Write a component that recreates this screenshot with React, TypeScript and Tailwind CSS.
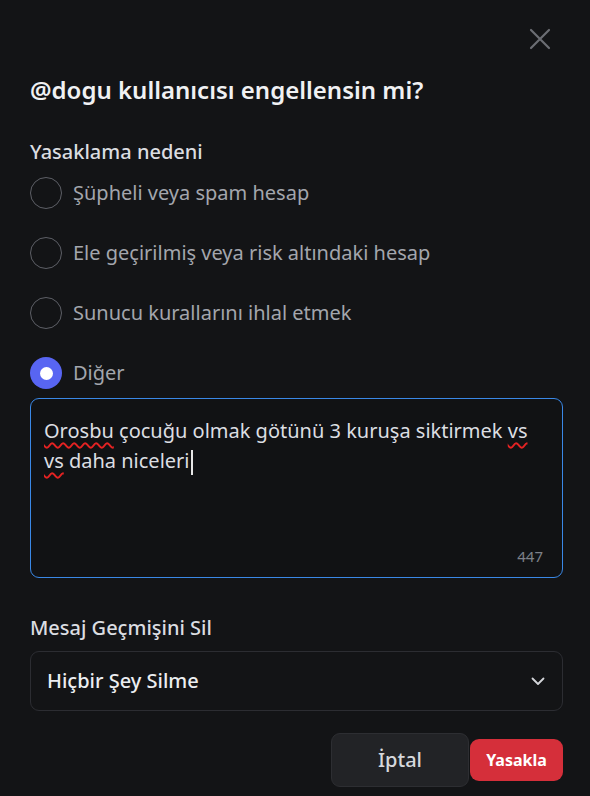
import React from "react";

const font = { fontFamily: '"Noto Sans", "Open Sans", sans-serif' };

function Radio({ label, checked }: { label: string; checked?: boolean }) {
  return (
    <div className="flex items-center h-[60px] gap-[11px]">
      {checked ? (
        <div className="w-[32px] h-[32px] rounded-full bg-[#5865f2] flex items-center justify-center shrink-0">
          <div className="w-[13px] h-[13px] rounded-full bg-white" />
        </div>
      ) : (
        <div className="w-[32px] h-[32px] rounded-full border-[1.5px] border-[#5d5f66] shrink-0" />
      )}
      <span className="text-[20px] text-[#a3a6ad] leading-none">{label}</span>
    </div>
  );
}

const wavy = "underline decoration-wavy decoration-[#e52222] decoration-[1.5px] underline-offset-[4px]";

export default function App() {
  return (
    <div className="w-[590px] h-[796px] bg-[#131416] pl-[30px] pr-[27px] overflow-hidden" style={font}>
      <div className="flex justify-end pt-[28px] pr-[12px]">
        <svg width="22" height="22" viewBox="0 0 22 22" fill="none">
          <path d="M2 2L20 20M20 2L2 20" stroke="#6b6d73" strokeWidth="2.2" strokeLinecap="round" />
        </svg>
      </div>
      <h1 className="mt-[25px] text-[24px] leading-[30px] font-semibold text-[#f0f1f3]">
        @dogu kullanıcısı engellensin mi?
      </h1>
      <div className="mt-[35px] text-[20px] leading-[24px] font-medium text-[#dbdde1]">Yasaklama nedeni</div>
      <div className="flex flex-col mt-[-1px]">
        <Radio label="Şüpheli veya spam hesap" />
        <Radio label="Ele geçirilmiş veya risk altındaki hesap" />
        <Radio label="Sunucu kurallarını ihlal etmek" />
        <Radio label="Diğer" checked />
      </div>
      <div className="relative mt-[-5px] h-[180px] rounded-[9px] border border-[#3a88e6] bg-[#111214] pl-[13px] pr-[30px] pt-[17px]">
        <p className="text-[20px] leading-[30px] text-[#dcdee2]">
          <span className={wavy}>Orosbu</span> çocuğu olmak götünü 3 kuruşa siktirmek{" "}
          <span className={wavy}>vs</span> <span className={wavy}>vs</span> daha niceleri
          <span className="inline-block w-[2px] h-[25px] bg-[#e6e6e6] align-middle ml-[1px]" />
        </p>
        <div className="absolute right-[19px] bottom-[10px] text-[15px] text-[#7d8088]">447</div>
      </div>
      <div className="mt-[38px] text-[20px] leading-[24px] font-medium text-[#dbdde1]">Mesaj Geçmişini Sil</div>
      <div className="mt-[11px] h-[60px] rounded-[9px] border border-[#2c2d32] flex items-center justify-between pl-[16px] pr-[16px]">
        <span className="text-[20px] font-medium text-[#eceef1]">Hiçbir Şey Silme</span>
        <svg width="16" height="16" viewBox="0 0 16 16" fill="none">
          <path d="M2.5 5.5L8 11L13.5 5.5" stroke="#d4d6da" strokeWidth="1.8" strokeLinecap="round" strokeLinejoin="round" />
        </svg>
      </div>
      <div className="mt-[22px] flex justify-end items-center gap-[1px]">
        <div className="w-[138px] h-[54px] rounded-[9px] bg-[#222326] border border-[#2d2e32] flex items-center justify-center text-[20px] font-medium text-[#d6d8dc]">
          İptal
        </div>
        <div className="w-[93px] h-[42px] rounded-[9px] bg-[#d52f3a] flex items-center justify-center text-[16px] font-bold text-white">
          Yasakla
        </div>
      </div>
    </div>
  );
}
